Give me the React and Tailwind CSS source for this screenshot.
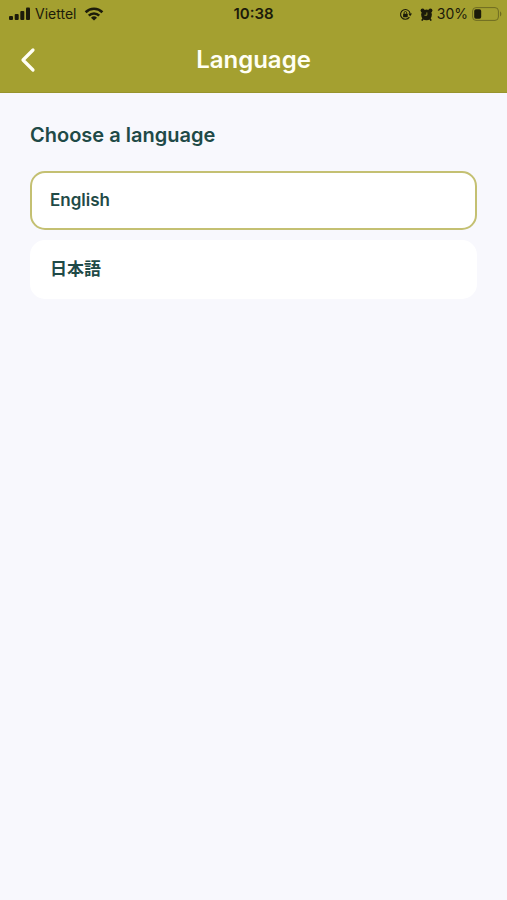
import React, { useState } from "react";

const languages = [
  { code: "en", label: "English" },
  { code: "ja", label: "日本語" },
];

const StatusBar = () => (
  <div className="grid grid-cols-3 items-center h-7 px-2 text-[15px] text-[#1c1b0a]">
    <div className="flex items-center gap-1">
      <svg width="23" height="14" viewBox="0 0 23 14" fill="currentColor" aria-hidden="true">
        <rect x="1" y="9" width="4" height="4" rx="1" />
        <rect x="6.7" y="7" width="4" height="6" rx="1" />
        <rect x="12.3" y="4" width="4" height="9" rx="1" />
        <rect x="18" y="0.5" width="4" height="12.5" rx="1" />
      </svg>
      <span className="text-sm">Viettel</span>
      <svg className="ml-1" width="20" height="14" viewBox="0 0 20 14" fill="none" stroke="currentColor" strokeWidth="2.6" aria-hidden="true">
        <path d="M1.6 5.2a12 12 0 0 1 16.8 0" />
        <path d="M4.8 8.6a7.4 7.4 0 0 1 10.4 0" />
        <path d="M10 13.6 7 10.7a4.4 4.4 0 0 1 6 0Z" fill="currentColor" stroke="none" />
      </svg>
    </div>

    <span className="text-center font-semibold">10:38</span>

    <div className="flex items-center justify-end gap-1 -mr-1">
      {/* Rotation lock */}
      <svg width="13" height="13" viewBox="0 0 14 14" fill="none" stroke="currentColor" strokeWidth="1.2" aria-hidden="true">
        <path d="M11.2 9.8A5.2 5.2 0 1 1 12 6" />
        <path d="M10 6h4l-2 3Z" fill="currentColor" stroke="none" />
        <rect x="4.4" y="6.2" width="5" height="3.8" rx="0.6" fill="currentColor" stroke="none" />
        <path d="M5.5 6.4V5.2a1.4 1.4 0 0 1 2.8 0v1.2" strokeWidth="1" />
      </svg>
      {/* Alarm */}
      <svg className="ml-1" width="13" height="13" viewBox="0 0 14 14" fill="currentColor" aria-hidden="true">
        <circle cx="7" cy="7.4" r="5.8" />
        <circle cx="2.8" cy="2.8" r="2.2" />
        <circle cx="11.2" cy="2.8" r="2.2" />
        <path d="M2.4 13 4 10.8M11.6 13 10 10.8" stroke="currentColor" strokeWidth="1.8" strokeLinecap="round" />
        <path d="M4.8 7.8H7.4V4.8" stroke="#a4a030" strokeWidth="0.9" fill="none" />
      </svg>
      <span className="text-sm">30%</span>
      <svg width="31" height="14" viewBox="0 0 31 14" aria-hidden="true">
        <rect x="0.6" y="0.6" width="25.8" height="12.8" rx="3.4" fill="none" stroke="#6f6c22" />
        <rect x="2.2" y="2.2" width="7" height="9.6" rx="1.8" fill="currentColor" />
        <path d="M28 4.6c1.8.6 1.8 4.2 0 4.8Z" fill="#6f6c22" />
      </svg>
    </div>
  </div>
);

const App = () => {
  const [selected, setSelected] = useState("en");

  return (
    <div className="min-h-screen bg-[#f8f8fd] font-['Inter','Noto_Sans_CJK_JP',sans-serif] text-[#1f4a47]">
      <header className="bg-[#a4a030] border-b border-[#98942c]">
        <StatusBar />
        <div className="grid grid-cols-[48px_1fr_48px] items-center h-16">
          <button type="button" aria-label="Back" className="flex items-center justify-center h-12 pl-2">
            <svg width="18" height="26" viewBox="0 0 18 26" fill="none" stroke="#fffff4" strokeWidth="3.2" strokeLinecap="round" strokeLinejoin="round">
              <path d="M14 3 4 13l10 10" />
            </svg>
          </button>
          <h1 className="text-center text-2xl font-semibold text-[#fffff4]">Language</h1>
        </div>
      </header>

      <main className="px-[30px] pt-[30px]">
        <h2 id="language-title" className="text-xl leading-6 font-semibold">
          Choose a language
        </h2>
        <div role="group" aria-labelledby="language-title" className="flex flex-col gap-[10px] mt-6">
          {languages.map((lang) => (
            <button
              key={lang.code}
              type="button"
              aria-pressed={selected === lang.code}
              onClick={() => setSelected(lang.code)}
              className={`h-[59px] w-full rounded-[15px] border-2 bg-white px-[18px] text-left text-[17px] font-semibold ${
                selected === lang.code ? "border-[#c4c072]" : "border-white"
              }`}
            >
              {lang.label}
            </button>
          ))}
        </div>
      </main>
    </div>
  );
};

export default App;
